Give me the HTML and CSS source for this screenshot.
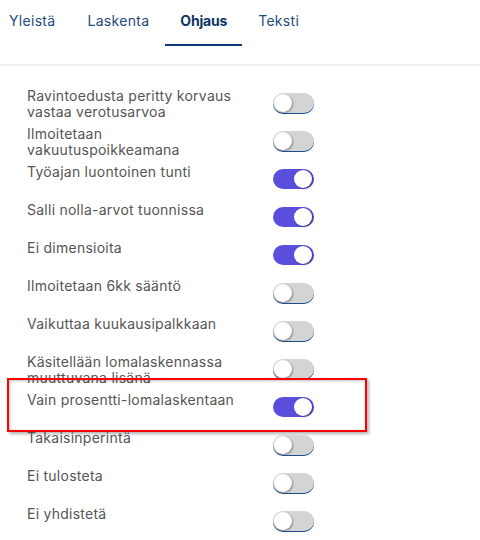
FILE: index.html
```html
<!DOCTYPE html>
<html lang="fi">
<head>
<meta charset="utf-8">
<link rel="stylesheet" href="styles.css">
</head>
<body>
<nav class="tabs">
  <div class="tab">Yleistä</div>
  <div class="tab">Laskenta</div>
  <div class="tab active">Ohjaus</div>
  <div class="tab">Teksti</div>
</nav>
<div class="divider"></div>
<ul class="settings">
  <li class="row"><span class="label">Ravintoedusta peritty korvaus vastaa verotusarvoa</span><span class="toggle"></span></li>
  <li class="row"><span class="label">Ilmoitetaan vakuutuspoikkeamana</span><span class="toggle"></span></li>
  <li class="row"><span class="label">Työajan luontoinen tunti</span><span class="toggle on"></span></li>
  <li class="row"><span class="label">Salli nolla-arvot tuonnissa</span><span class="toggle on"></span></li>
  <li class="row"><span class="label">Ei dimensioita</span><span class="toggle on"></span></li>
  <li class="row"><span class="label">Ilmoitetaan 6kk sääntö</span><span class="toggle"></span></li>
  <li class="row"><span class="label">Vaikuttaa kuukausipalkkaan</span><span class="toggle"></span></li>
  <li class="row"><span class="label">Käsitellään lomalaskennassa muuttuvana lisänä</span><span class="toggle"></span></li>
  <li class="row highlighted"><span class="label">Vain prosentti-lomalaskentaan</span><span class="toggle on"></span></li>
  <li class="row"><span class="label">Takaisinperintä</span><span class="toggle"></span></li>
  <li class="row"><span class="label">Ei tulosteta</span><span class="toggle"></span></li>
  <li class="row"><span class="label">Ei yhdistetä</span><span class="toggle"></span></li>
</ul>
</body>
</html>
```
FILE: styles.css
```css
* { box-sizing: border-box; }
html, body { margin: 0; padding: 0; background: #fff; }
body {
  font-family: "Inter", "Liberation Sans", sans-serif;
  width: 480px;
  height: 540px;
  overflow: hidden;
}
.tabs {
  display: flex;
  margin-left: -7px;
  height: 46px;
}
.tab {
  padding: 12px 16px 0;
  font-size: 14px;
  line-height: 17px;
  letter-spacing: 0.3px;
  color: #1f4a7d;
  height: 46px;
}
.tab.active {
  font-weight: 700;
  letter-spacing: -0.2px;
  padding: 12px 15px 0;
  color: #0d3567;
  border-bottom: 2px solid #0b3b76;
}
.divider {
  margin-top: 18px;
  height: 2px;
  background: #efefef;
}
.settings {
  list-style: none;
  margin: 0;
  padding: 22px 0 0 27px;
}
.row {
  position: relative;
  display: flex;
  align-items: flex-start;
  height: 38px;
}
.label {
  width: 246px;
  padding-right: 30px;
  font-size: 14px;
  line-height: 16px;
  letter-spacing: 0.25px;
  color: #555;
}
.toggle {
  position: relative;
  margin-top: 5px;
  width: 41px;
  height: 20px;
  border-radius: 10px;
  background: #d4d4d4;
  box-shadow: 0 1px 0 #1d4d8c;
}
.toggle::after {
  content: "";
  position: absolute;
  left: 1px;
  top: 1px;
  width: 18px;
  height: 18px;
  border-radius: 50%;
  background: #fff;
  box-shadow: 1px 1px 2px rgba(0,0,0,0.35);
}
.toggle.on {
  background: #5a4fdc;
  box-shadow: none;
}
.toggle.on::after {
  left: auto;
  right: 2px;
}
.highlighted::before {
  content: "";
  position: absolute;
  left: -20px;
  top: -14px;
  width: 356px;
  height: 50px;
  border: 2px solid #ff0000;
  box-shadow: 2px 2px 3px rgba(0,0,0,0.3), inset 1px 1px 3px rgba(0,0,0,0.25);
  pointer-events: none;
}
```
